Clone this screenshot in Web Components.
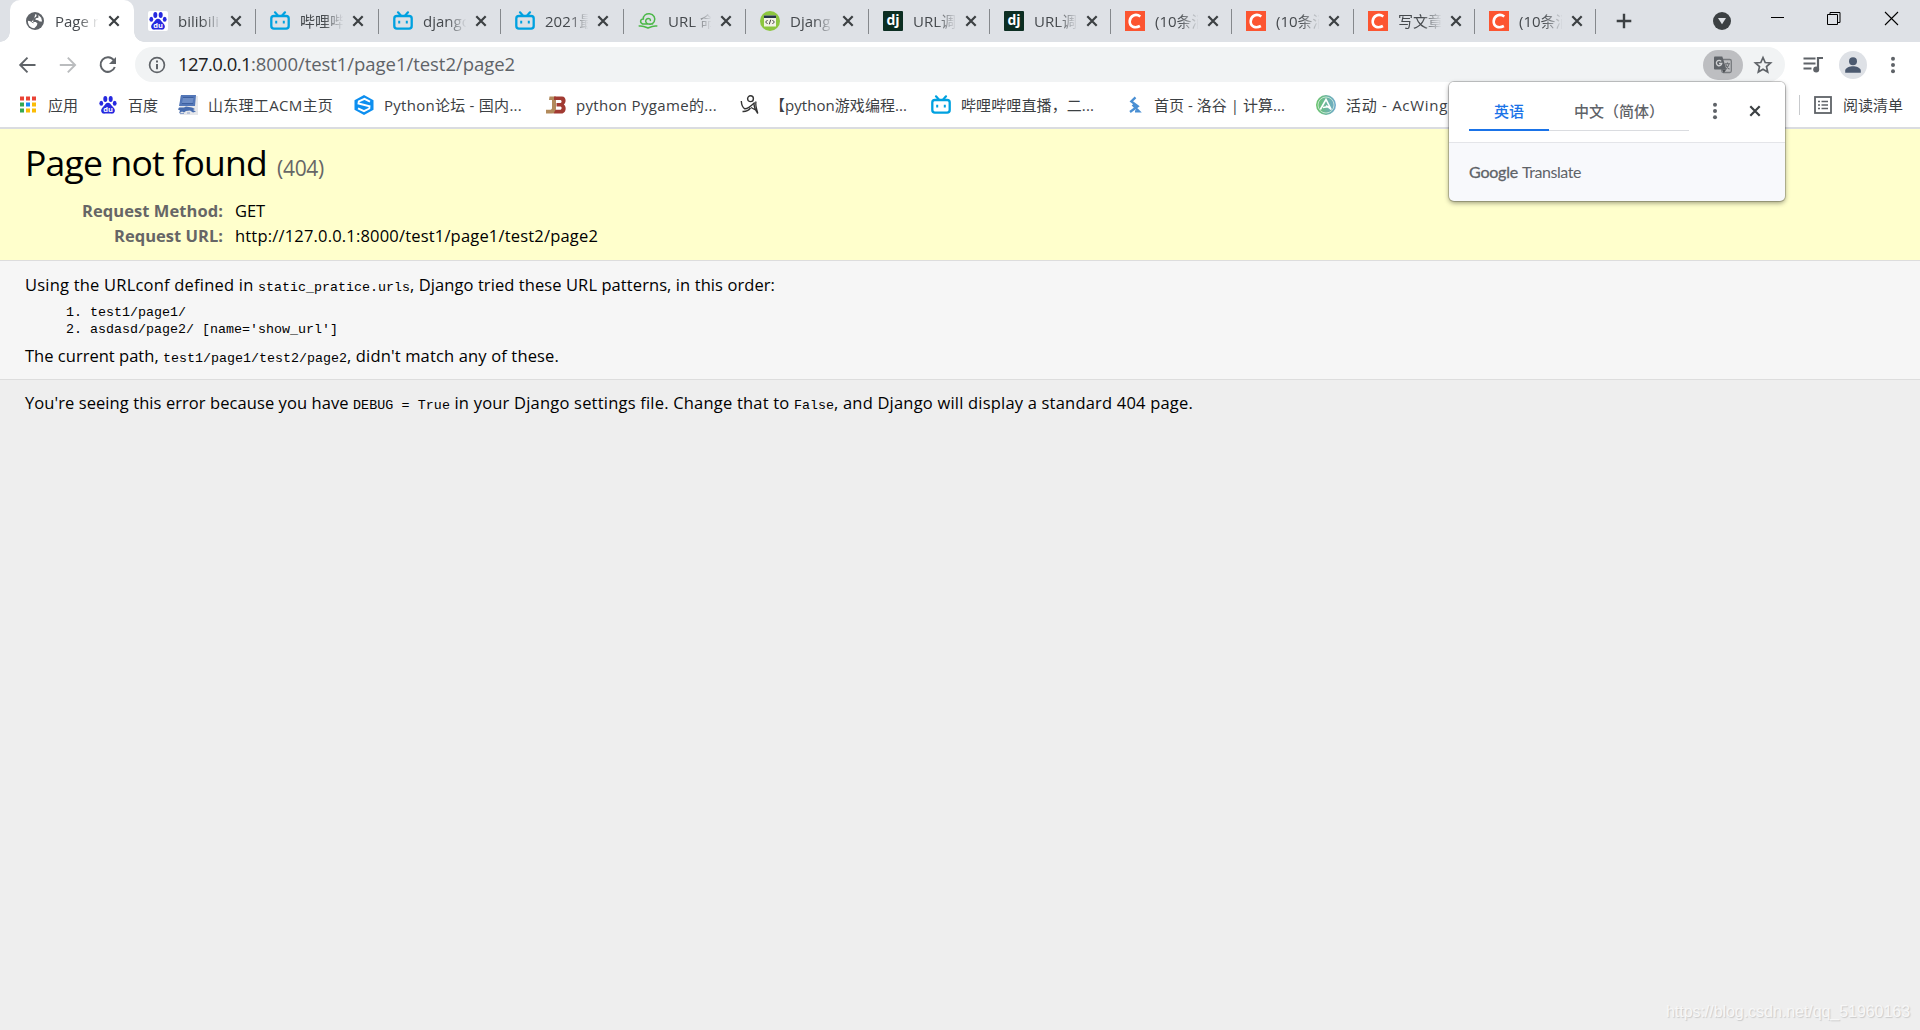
<!DOCTYPE html>
<html lang="zh-CN">
<head>
<meta charset="utf-8">
<title>Page not found at /test1/page1/test2/page2</title>
<style>
html, body
{
    margin: 0;
    height: 1030px;
    overflow: hidden;
    background: #eee;
    font-family: "Open Sans", "Noto Sans CJK SC", sans-serif;
}
</style>
</head>
<body>

<browser-frame>
    <browser-tab slot="tabs" active icon="globe" style="width:124px">Page n</browser-tab>
    <browser-tab slot="tabs" icon="baidu" style="width:122px">bilibili</browser-tab>
    <browser-tab slot="tabs" icon="bili" style="width:123px">哔哩哔</browser-tab>
    <browser-tab slot="tabs" icon="bili" style="width:122px">django</browser-tab>
    <browser-tab slot="tabs" icon="bili" style="width:123px">2021最</browser-tab>
    <browser-tab slot="tabs" icon="cloud" style="width:122px">URL 命</browser-tab>
    <browser-tab slot="tabs" icon="code" style="width:123px">Djang</browser-tab>
    <browser-tab slot="tabs" icon="dj" style="width:121px">URL调</browser-tab>
    <browser-tab slot="tabs" icon="dj" style="width:121px">URL调</browser-tab>
    <browser-tab slot="tabs" icon="csdn" style="width:121px">(10条消</browser-tab>
    <browser-tab slot="tabs" icon="csdn" style="width:122px">(10条消</browser-tab>
    <browser-tab slot="tabs" icon="csdn" style="width:121px">写文章</browser-tab>
    <browser-tab slot="tabs" icon="csdn" style="width:121px">(10条消</browser-tab>

    <book-mark slot="bookmarks" icon="apps" style="width:80px"><fit-text width="30">应用</fit-text></book-mark>
    <book-mark slot="bookmarks" icon="baidu" style="width:80px"><fit-text width="30">百度</fit-text></book-mark>
    <book-mark slot="bookmarks" icon="sdut" style="width:176px"><fit-text width="125">山东理工ACM主页</fit-text></book-mark>
    <book-mark slot="bookmarks" icon="hex" style="width:192px"><fit-text width="138">Python论坛 - 国内...</fit-text></book-mark>
    <book-mark slot="bookmarks" icon="jb" style="width:194px"><fit-text width="141">python Pygame的...</fit-text></book-mark>
    <book-mark slot="bookmarks" icon="stick" style="width:191px"><fit-text width="137">【python游戏编程...</fit-text></book-mark>
    <book-mark slot="bookmarks" icon="bili" style="width:193px"><fit-text width="133">哔哩哔哩直播，二...</fit-text></book-mark>
    <book-mark slot="bookmarks" icon="luogu" style="width:192px"><fit-text width="131">首页 - 洛谷 | 计算...</fit-text></book-mark>
    <book-mark slot="bookmarks" icon="acwing" style="width:140px"><fit-text width="102">活动 - AcWing</fit-text></book-mark>
</browser-frame>

<error-page></error-page>
<translate-popup></translate-popup>
<water-mark><fit-text width="244">https://blog.csdn.net/qq_51960163</fit-text></water-mark>

<script>
const icons =
{
    globe: `<circle cx="10" cy="10" r="9" fill="#5f6368"/><path d="M10.500 3c1.500.6 1.300 2 .3 2.900L9 7l-.3 2.200-2 .8.300 1h3.800l1.700 1.600-.8 2.200-2.400 2.400C5 16.800 2.800 13.800 2.900 9.700l2.400.6 3.200 2.300-.3-2.600zM13.400 4l2.800 2.700.9 3.700-2.400.2-1.700-1.400-2.600-.4.4-1.500 2.600-.6z" fill="#fff"/>`,
    baidu: `<rect width="20" height="20" rx="2" fill="#fff"/><g fill="#2629df"><ellipse cx="7.300" cy="4" rx="2" ry="2.900"/><ellipse cx="12.700" cy="4" rx="2" ry="2.900"/><ellipse cx="3.300" cy="8.300" rx="1.900" ry="2.500"/><ellipse cx="16.700" cy="8.300" rx="1.900" ry="2.500"/><path d="M10 7.800c2 0 2.700 1.700 4.300 3.400 1.700 1.800 3 3 2.500 5-.4 2-2 2.600-3.800 2.400-2-.3-4-.3-6 0-1.800.2-3.400-.4-3.800-2.400-.4-2 .8-3.200 2.500-5C7.300 9.500 8 7.800 10 7.800z"/></g><text x="10" y="16.600" text-anchor="middle" font-size="7.500" font-weight="700" fill="#fff" font-family="Open Sans">du</text>`,
    bili: `<path d="M5 1.300l2.800 3.200M15 1.300l-2.800 3.200" stroke="#00a1e0" stroke-width="2.200" stroke-linecap="round"/><rect x="1.300" y="5" width="17.400" height="12.600" rx="2.600" fill="none" stroke="#00a1e0" stroke-width="2.300"/><path d="M6.200 9.800v2.600M13.800 9.800v2.600" stroke="#00a1e0" stroke-width="2"/>`,
    cloud: `<g fill="none" stroke="#4cb849" stroke-width="1.500" stroke-linecap="round"><path d="M4.500 13C1.500 11.500 2.300 8 5.300 8 5 4.600 8 2.400 11.500 2.700c4.500.5 6.300 4.700 4.700 8-1.500 2.800-5.600 3.300-7.700 1.300-1.600-1.700-.8-4.200 1.500-4.500 1.800-.1 2.500 1 2.400 2M4.500 13h10"/><path d="M1.200 15c3.600-.6 5.800.6 8.800 2 3-1.400 5.200-2.600 8.800-2"/></g>`,
    code: `<circle cx="10" cy="10" r="10" fill="#8dc63f"/><rect x="4" y="4.500" width="12" height="11" fill="#f3f3e6"/><rect x="4" y="4.500" width="12" height="2.500" fill="#26364a"/><path d="M7.600 9l-2 2 2 2M12.400 9l2 2-2 2M10.700 8.700L9.300 13.300" fill="none" stroke="#444" stroke-width="1"/>`,
    dj: `<rect width="20" height="20" rx="1" fill="#0c2e22"/><text x="10" y="14.300" text-anchor="middle" font-size="14" font-weight="700" fill="#fff" font-family="Open Sans">dj</text>`,
    csdn: `<rect width="20" height="20" fill="#fc5531"/><path d="M15.300 5.500C10.500 2 5.300 4.800 4.700 10c-.4 5.900 5.300 7.600 10.200 5" fill="none" stroke="#fff" stroke-width="2.600"/>`,
    apps: `<path d="M2 1.500h4v4H2z" fill="#ea4335"/><path d="M8 1.500h4v4H8zM14 1.500h4v4h-4z" fill="#ea4335"/><path d="M2 7.500h4v4H2zM2 13.500h4v4H2z" fill="#34a853"/><path d="M8 7.500h4v4H8z" fill="#1a88f5"/><path d="M14 7.500h4v4h-4zM8 13.500h4v4H8zM14 13.500h4v4h-4z" fill="#fbbc05"/>`,
    sdut: `<rect x="2" y="1" width="18" height="19" fill="#e6e7ea"/><path d="M3 0h15l-1 11H1z" fill="#5377b8"/><path d="M5 2.500h10.500L14.500 8H4z" fill="#6d8dc6"/><path d="M5 2.500h10.500M4 8.500h11" stroke="#3d5f9f" stroke-width="1"/><path d="M1 12.500h5l2-1 6 1 3 1.500-2 1 3 1.500-3 1-3-2-4 .5-2 1.500-2-1-3 2 1-3-2-1z" fill="#476cae"/><path d="M2 18.500h4M9 18h3" stroke="#8ba1cb" stroke-width="1.200"/>`,
    hex: `<path d="M10 0L19.500 5.300V14.700L10 20 .5 14.700V5.300z" fill="#0d8ff0"/><path d="M16 6.600L10.500 3.800 4.800 6.500 4.500 8.500 15.500 11.300 15.300 13.500 10 16.200 4 13.300" fill="none" stroke="#fff" stroke-width="1.900"/>`,
    jb: `<path d="M3.500 1.500h6.500v12c0 3.500-1.500 5-4 5H0v-3.800h3.500c1.800 0 2.500-.5 2.500-2V5H3z" fill="#b28a5b"/><path d="M8 1.500h8c4.300 0 4.500 6.200 1.800 8C21 11.500 20 18.500 15.500 18.500H7.500l2-3.800h5c1.500 0 1.500-3.200 0-3.200h-4V8h4c1.400 0 1.400-3 0-3H8z" fill="#a13a32"/>`,
    stick: `<circle cx="10.500" cy="3.700" r="2.900" fill="none" stroke="#333" stroke-width="1.400"/><path d="M1.300 6C1.500 9.500 2.500 12.500 4.800 13.800 8 14 11 11 14.700 7.500M2.500 16.500c3 .3 6-1 8-3.500" fill="none" stroke="#333" stroke-width="1.400"/><path d="M13.800 8c.2 4 1.700 7.500 4 10.500M16 6.500c-1 4 1 8 1.800 12M11 12.500l5.500 3" fill="none" stroke="#333" stroke-width="1.300"/>`,
    luogu: `<path d="M11.500 2.300L7.300 6.300l6.500 5L6 17M8.500 9.800l6.500 6.500h-4" fill="none" stroke="#4a8fd3" stroke-width="2.300"/>`,
    acwing: `<defs><linearGradient id="g"><stop stop-color="#6ac46b"/><stop offset="1" stop-color="#6fa9cf"/></linearGradient></defs><circle cx="10" cy="10" r="10" fill="url(#g)"/><circle cx="10" cy="10" r="8" fill="none" stroke="#d8f0de" stroke-width=".8"/><path d="M4.300 14.500L10 4.500l5.200 10-5-4M7 12.500l6-1" fill="none" stroke="#fff" stroke-width="1.600"/>`,
    cross: `<path d="M5.300 5.300l9.400 9.400M14.700 5.300l-9.400 9.400" stroke="#3c4043" stroke-width="2.200"/>`,
    plus: `<path d="M10 2.700v14.600M2.700 10h14.600" stroke="#3c4043" stroke-width="2.400"/>`,
    back: `<path d="M17.500 10H3M9.500 2.700L2.200 10l7.300 7.300" fill="none" stroke="#5f6368" stroke-width="1.900"/>`,
    forward: `<path d="M1.800 10H16.500M9.800 2.700L17.100 10l-7.300 7.300" fill="none" stroke="#babcbe" stroke-width="1.900"/>`,
    reload: `<path d="M15.800 5.200A7.300 7.300 0 1 0 16.800 12" fill="none" stroke="#5f6368" stroke-width="2"/><path d="M18 2v7h-7z" fill="#5f6368"/>`,
    info: `<circle cx="10" cy="10" r="7.400" fill="none" stroke="#5f6368" stroke-width="1.700"/><path d="M10 9v5.200M10 5.600v2" stroke="#5f6368" stroke-width="2"/>`,
    translate: `<rect x="8.800" y="4.500" width="9.500" height="13" rx="1.500" fill="none" stroke="#777a7e" stroke-width="1.300"/><path d="M2.300 1.500h7L13.500 14.500H2.300C1.400 14.500 1 14 1 13.200V2.800C1 2 1.400 1.500 2.300 1.500z" fill="#5f6368"/><path d="M9 14.500h4.300l-2.500 3.500z" fill="#4b4e52"/><path d="M8.200 6.300a2.700 2.700 0 1 0 .6 2.200H6" fill="none" stroke="#d0d1d3" stroke-width="1.300"/><path d="M12 8.700h5M14.500 7.500v1.200M16 9c-.5 2.200-1.700 4-3.400 5.200M12.700 9.500c.5 2 2 3.600 3.800 4.800" fill="none" stroke="#6b6e72" stroke-width="1.100"/>`,
    star: `<path d="M10 2.500l2.200 5 5.400.5-4.100 3.600 1.200 5.400L10 14.200 5.300 17l1.200-5.400L2.400 8l5.400-.5z" fill="none" stroke="#5f6368" stroke-width="1.700"/>`,
    queue: `<path d="M.5 3.500h12M.5 8.500h12M.5 13.500h8" stroke="#5f6368" stroke-width="2"/><path d="M15 14V3h5" fill="none" stroke="#5f6368" stroke-width="2.200"/><circle cx="13.200" cy="14.500" r="3" fill="#5f6368"/>`,
    person: `<circle cx="14" cy="14" r="14" fill="#dee1e6"/><circle cx="14" cy="10.300" r="4" fill="#4c5a70"/><path d="M6.200 21.700v-2c0-3 5-4.400 7.800-4.400s7.800 1.400 7.800 4.400v2z" fill="#4c5a70"/>`,
    dots: `<g fill="#5f6368"><circle cx="10" cy="3.700" r="2"/><circle cx="10" cy="10" r="2"/><circle cx="10" cy="16.300" r="2"/></g>`,
    drop: `<circle cx="10" cy="10" r="9" fill="#3c4043"/><path d="M6 7h8l-4 6.200z" fill="#dee1e6"/>`,
    min: `<path d="M3 6.500h13" stroke="#000"/>`,
    restore: `<path d="M3.500 3.500h10v10h-10zM6 3V1.500h10v10H14" fill="none" stroke="#000" stroke-width="1"/>`,
    close: `<path d="M3 1l13 13M16 1L3 14" stroke="#000" stroke-width="1.100"/>`,
    list: `<rect x="2" y="2" width="16" height="16" fill="none" stroke="#5f6368" stroke-width="1.800"/><path d="M5 6.500h2M5 10h2M5 13.500h2M8.500 6.500H15M8.500 10H15M8.500 13.500H15" stroke="#5f6368" stroke-width="1.700"/>`
};

class UiIcon extends HTMLElement
{
    connectedCallback()
    {
        var size = this.getAttribute("size") || 20;
        // the avatar is drawn on a 28 unit grid, all others on 20
        var box = this.getAttribute("name") == "person" ? 28 : 20;
        var shadow = this.attachShadow({mode: "open"});
        shadow.innerHTML =
        `<style>
        :host
        {
            display: block;
            flex: none;
            width: ${size}px;
            height: ${size}px;
        }
        svg
        {
            display: block;
        }
        </style>
        <svg width="${size}" height="${size}" viewBox="0 0 ${box} ${box}">${icons[this.getAttribute("name")]}</svg>`;
    }
}

// spreads its text over the given width
class FitText extends HTMLElement
{
    connectedCallback()
    {
        var shadow = this.attachShadow({mode: "open"});
        // no space between style and slot, white-space: pre would draw it
        shadow.innerHTML =
        `<style>
        :host
        {
            display: inline-block;
            flex: none;
            white-space: pre;
        }
        </style><slot></slot>`;
        var width = Number(this.getAttribute("width"));
        var natural = this.getBoundingClientRect().width;
        this.style.letterSpacing = (width - natural)/this.textContent.length + "px";
        this.style.width = width + "px";
    }
}

class BrowserTab extends HTMLElement
{
    connectedCallback()
    {
        var shadow = this.attachShadow({mode: "open"});
        shadow.innerHTML =
        `<style>
        :host
        {
            display: flex;
            flex: none;
            box-sizing: border-box;
            height: 42px;
            align-items: center;
            padding-left: 14px;
            font-size: 15px;
            color: #45494d;
            background: linear-gradient(#85888c, #85888c) right 9px / 1px 25px no-repeat;
        }
        :host([active])
        {
            background: white;
            border-radius: 10px 10px 0 0;
            padding-left: 15px;
        }
        :host([active])::before, :host([active])::after
        {
            content: "";
            position: absolute;
            top: 32px;
            left: 0;
            width: 10px;
            height: 10px;
            background: radial-gradient(circle at 0 0, #dee1e6 9.5px, white 10px);
        }
        :host([active])::after
        {
            left: 134px;
            background: radial-gradient(circle at 100% 0, #dee1e6 9.5px, white 10px);
        }
        .title
        {
            width: 43px;
            margin: 0 5px 0 10px;
            line-height: 24px;
            overflow: hidden;
            white-space: pre;
            -webkit-mask-image: linear-gradient(90deg, black 55%, transparent 102%);
        }
        :host([active]) .title
        {
            margin-right: 6px;
        }
        </style>
        <ui-icon name="${this.getAttribute("icon")}"></ui-icon>
        <div class="title"><slot></slot></div>
        <ui-icon name="cross"></ui-icon>`;
    }
}

class BookMark extends HTMLElement
{
    connectedCallback()
    {
        var shadow = this.attachShadow({mode: "open"});
        shadow.innerHTML =
        `<style>
        :host
        {
            display: flex;
            flex: none;
            align-items: center;
            gap: 10px;
            font-size: 15px;
            line-height: 24px;
            color: #3c4043;
        }
        </style>
        <ui-icon name="${this.getAttribute("icon")}"></ui-icon>
        <slot></slot>`;
    }
}

class BrowserFrame extends HTMLElement
{
    connectedCallback()
    {
        var shadow = this.attachShadow({mode: "open"});
        shadow.innerHTML =
        `<style>
        :host
        {
            display: block;
            height: 127px;
            background: white;
            border-bottom: 2px solid #dadce0;
        }
        .strip
        {
            display: flex;
            height: 42px;
            padding-left: 10px;
            background: #dee1e6;
        }
        .strip .new
        {
            margin: 11px 0 0 18px;
        }
        .window
        {
            display: flex;
            margin-left: auto;
            padding: 11px 18px 0 0;
        }
        .window ui-icon + ui-icon
        {
            margin-left: 36px;
        }
        .bar
        {
            display: flex;
            align-items: center;
            height: 45px;
            padding: 0 17px 0 18px;
        }
        .nav
        {
            display: flex;
            flex: none;
            gap: 20px;
            width: 117px;
        }
        .address
        {
            display: flex;
            flex: none;
            align-items: center;
            box-sizing: border-box;
            width: 1650px;
            height: 35px;
            padding: 0 12px 0 12px;
            border-radius: 18px;
            background: #f1f3f4;
            font-size: 18.5px;
            line-height: 30px;
            color: #5f6368;
        }
        .address .url
        {
            flex: 1;
            margin: 0 0 2px 11px;
        }
        .host
        {
            color: #202124;
        }
        .pill
        {
            display: flex;
            align-items: center;
            justify-content: center;
            width: 40px;
            height: 30px;
            margin-right: 10px;
            border-radius: 15px;
            background: #bdbec1;
        }
        .right
        {
            display: flex;
            align-items: center;
            margin-left: 18px;
        }
        .books
        {
            display: flex;
            align-items: center;
            height: 36px;
            padding: 0 17px 0 18px;
        }
        .reading
        {
            display: flex;
            align-items: center;
            margin-left: auto;
            padding-left: 14px;
            background: linear-gradient(#c8cacd, #c8cacd) left / 1px 20px no-repeat;
            font-size: 15px;
            line-height: 24px;
            color: #3c4043;
        }
        .reading ui-icon
        {
            margin-right: 10px;
        }
        </style>
        <div class="strip">
            <slot name="tabs"></slot>
            <ui-icon class="new" name="plus"></ui-icon>
            <div class="window">
                <ui-icon name="drop"></ui-icon>
                <ui-icon name="min" style="margin-left:36px"></ui-icon>
                <ui-icon name="restore"></ui-icon>
                <ui-icon name="close" style="margin-left:38px"></ui-icon>
            </div>
        </div>
        <div class="bar">
            <div class="nav">
                <ui-icon name="back"></ui-icon>
                <ui-icon name="forward"></ui-icon>
                <ui-icon name="reload"></ui-icon>
            </div>
            <div class="address">
                <ui-icon name="info"></ui-icon>
                <div class="url"><fit-text class="host" width="73">127.0.0.1</fit-text><fit-text width="264">:8000/test1/page1/test2/page2</fit-text></div>
                <div class="pill"><ui-icon name="translate"></ui-icon></div>
                <ui-icon name="star"></ui-icon>
            </div>
            <div class="right">
                <ui-icon name="queue"></ui-icon>
                <ui-icon name="person" size="28" style="margin:0 16px"></ui-icon>
                <ui-icon name="dots"></ui-icon>
            </div>
        </div>
        <div class="books">
            <slot name="bookmarks"></slot>
            <div class="reading"><ui-icon name="list"></ui-icon><fit-text width="60">阅读清单</fit-text></div>
        </div>`;
    }
}

class ErrorPage extends HTMLElement
{
    connectedCallback()
    {
        var shadow = this.attachShadow({mode: "open"});
        shadow.innerHTML =
        `<style>
        :host
        {
            display: block;
            font-size: 16.5px;
            line-height: 25px;
            color: #000;
        }
        section
        {
            box-sizing: border-box;
            padding-left: 25px;
        }
        p, h1, ol
        {
            margin: 0;
            white-space: nowrap;
        }
        .row
        {
            display: flex;
            align-items: baseline;
        }
        .summary
        {
            height: 132px;
            padding-top: 5px;
            background: #ffffcc;
            border-bottom: 1px solid #ddd;
        }
        h1
        {
            font-size: 35.5px;
            font-weight: normal;
            line-height: 56px;
            margin-bottom: 8px;
        }
        h1 .code
        {
            font-size: 21px;
            line-height: 24px;
            color: #666;
            margin-left: 10px;
        }
        .meta
        {
            display: grid;
            grid-template-columns: 198px auto;
            grid-auto-rows: 25px;
            column-gap: 12px;
        }
        .meta .key
        {
            text-align: right;
            font-weight: bold;
            color: #666;
        }
        .info
        {
            height: 119px;
            padding-top: 11px;
            background: #f6f6f6;
            border-bottom: 1px solid #ddd;
        }
        .mono, ol
        {
            font-family: "Liberation Mono", monospace;
            font-size: 13.33px;
            line-height: 17px;
        }
        ol
        {
            margin: 7px 0 5px 0;
            padding-left: 65px;
        }
        li
        {
            height: 17px;
        }
        .explain
        {
            padding-top: 10px;
        }
        </style>
        <section class="summary">
            <h1 class="row"><fit-text width="242">Page not found</fit-text><fit-text class="code" width="47">(404)</fit-text></h1>
            <div class="meta">
                <div class="key"><fit-text width="141">Request Method:</fit-text></div>
                <div><fit-text width="30">GET</fit-text></div>
                <div class="key"><fit-text width="109">Request URL:</fit-text></div>
                <div><fit-text width="363">http://127.0.0.1:8000/test1/page1/test2/page2</fit-text></div>
            </div>
        </section>
        <section class="info">
            <p class="row"><fit-text width="233">Using the URLconf defined in </fit-text><fit-text class="mono" width="152">static_pratice.urls</fit-text><fit-text width="365">, Django tried these URL patterns, in this order:</fit-text></p>
            <ol>
                <li><fit-text width="96">test1/page1/</fit-text></li>
                <li><fit-text width="248">asdasd/page2/ [name='show_url']</fit-text></li>
            </ol>
            <p class="row"><fit-text width="138">The current path, </fit-text><fit-text class="mono" width="184">test1/page1/test2/page2</fit-text><fit-text width="212">, didn't match any of these.</fit-text></p>
        </section>
        <section class="explain">
            <p class="row"><fit-text width="328">You're seeing this error because you have </fit-text><fit-text class="mono" width="97">DEBUG = True</fit-text><fit-text width="344"> in your Django settings file. Change that to </fit-text><fit-text class="mono" width="40">False</fit-text><fit-text width="359">, and Django will display a standard 404 page.</fit-text></p>
        </section>`;
    }
}

class TranslatePopup extends HTMLElement
{
    connectedCallback()
    {
        var shadow = this.attachShadow({mode: "open"});
        shadow.innerHTML =
        `<style>
        :host
        {
            display: block;
            position: absolute;
            left: 1449px;
            top: 82px;
            width: 336px;
            height: 119px;
            overflow: hidden;
            border-radius: 5px;
            background: #f8f9fc;
            box-shadow: 0 0 0 1px rgba(0,0,0,.18), 0 2px 5px rgba(0,0,0,.4);
        }
        .head
        {
            display: flex;
            box-sizing: border-box;
            height: 61px;
            padding-left: 20px;
            background: white;
            border-bottom: 1px solid #e4e5e9;
            font-size: 15px;
            font-weight: 500;
            line-height: 24px;
            color: #5f6368;
        }
        .tab
        {
            box-sizing: border-box;
            width: 140px;
            height: 49px;
            padding: 17px 0 0 25px;
            border-bottom: 1px solid #dadce0;
        }
        .tab.on
        {
            width: 80px;
            color: #1a73e8;
            border-bottom: 2px solid #1a73e8;
        }
        .head ui-icon
        {
            margin: 19px 0 0 16px;
        }
        .foot
        {
            display: flex;
            padding: 15px 0 0 20px;
            gap: 4px;
            font-family: Lato, sans-serif;
            font-size: 16px;
            line-height: 28px;
            color: #5f6368;
        }
        .foot .brand
        {
            -webkit-text-stroke: .3px #5f6368;
        }
        </style>
        <div class="head">
            <div class="tab on"><fit-text width="30">英语</fit-text></div>
            <div class="tab"><fit-text width="90">中文（简体）</fit-text></div>
            <ui-icon name="dots"></ui-icon>
            <ui-icon name="cross" style="margin-left:20px"></ui-icon>
        </div>
        <div class="foot"><fit-text class="brand" width="49">Google</fit-text><fit-text width="59">Translate</fit-text></div>`;
    }
}

class WaterMark extends HTMLElement
{
    connectedCallback()
    {
        var shadow = this.attachShadow({mode: "open"});
        shadow.innerHTML =
        `<style>
        :host
        {
            display: block;
            position: absolute;
            right: 10px;
            bottom: 8px;
            font: 16px/20px "Liberation Sans", sans-serif;
            color: #f7f7f7;
            text-shadow: 1px 1px 1px #cacaca;
        }
        </style>
        <slot></slot>`;
    }
}

customElements.define("ui-icon", UiIcon);
customElements.define("browser-tab", BrowserTab);
customElements.define("book-mark", BookMark);
customElements.define("browser-frame", BrowserFrame);
customElements.define("error-page", ErrorPage);
customElements.define("translate-popup", TranslatePopup);
customElements.define("water-mark", WaterMark);
// last, so that every font is already in place when widths are measured
customElements.define("fit-text", FitText);
</script>
</body>
</html>
